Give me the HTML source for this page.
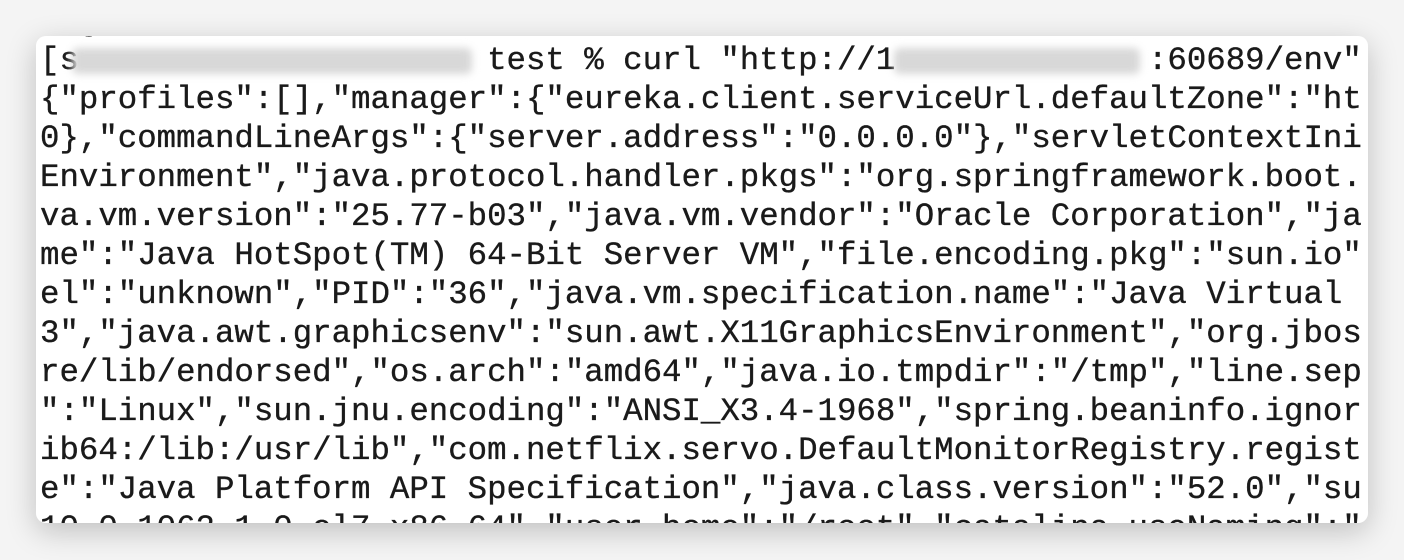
<html><head><style>
body{margin:0;width:1404px;height:560px;background:#f4f4f4;overflow:hidden;position:relative}
.sh{position:absolute;left:36px;top:36px;width:1332px;height:487px;border-radius:10px;box-shadow:0 8px 30px rgba(0,0,0,.22)}
.card{position:absolute;left:36px;top:36px;width:1332px;height:487px;border-radius:10px;background:#fff;overflow:hidden}
pre{position:absolute;left:4px;top:-34px;margin:0;font-family:"Liberation Mono",monospace;font-size:32.4px;line-height:39px;color:#1a1a1a;white-space:pre;letter-spacing:0;-webkit-text-stroke:0.35px #1a1a1a}
.b{position:absolute;background:#d8d8d8;filter:blur(4px);border-radius:6px}
</style></head><body>
<div class="sh"></div>
<div class="card">
<pre>  g                                                 
[s                     test % curl "http://1             :60689/env"
{"profiles":[],"manager":{"eureka.client.serviceUrl.defaultZone":"ht
0},"commandLineArgs":{"server.address":"0.0.0.0"},"servletContextIni
Environment","java.protocol.handler.pkgs":"org.springframework.boot.
va.vm.version":"25.77-b03","java.vm.vendor":"Oracle Corporation","ja
me":"Java HotSpot(TM) 64-Bit Server VM","file.encoding.pkg":"sun.io"
el":"unknown","PID":"36","java.vm.specification.name":"Java Virtual 
3","java.awt.graphicsenv":"sun.awt.X11GraphicsEnvironment","org.jbos
re/lib/endorsed","os.arch":"amd64","java.io.tmpdir":"/tmp","line.sep
":"Linux","sun.jnu.encoding":"ANSI_X3.4-1968","spring.beaninfo.ignor
ib64:/lib:/usr/lib","com.netflix.servo.DefaultMonitorRegistry.regist
e":"Java Platform API Specification","java.class.version":"52.0","su
10.0.1062.1.0.el7.x86_64","user.home":"/root","catalina.useNaming":"</pre>
<div class="b" style="left:36px;top:12px;width:400px;height:26px"></div>
<div class="b" style="left:858px;top:12px;width:246px;height:26px"></div>
</div>
</body></html>
